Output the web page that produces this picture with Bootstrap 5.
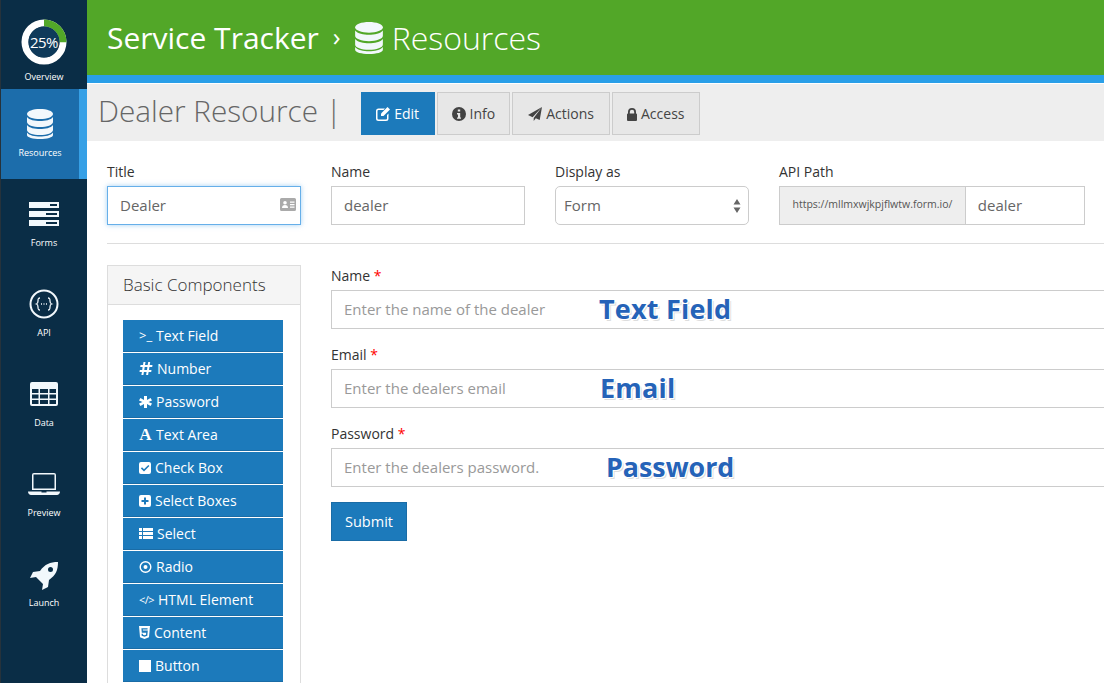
<!DOCTYPE html>
<html lang="en">
<head>
  <meta charset="UTF-8" />
  <meta name="viewport" content="width=device-width, initial-scale=1" />
  <title>Service Tracker - Resources</title>
  <link href="https://cdn.jsdelivr.net/npm/bootstrap@5.3.0/dist/css/bootstrap.min.css" rel="stylesheet" />
  <style>
    html, body { height: 100%; overflow: hidden; }
    body { font-family: "Open Sans", "Noto Sans", sans-serif; font-size: 14px; color: #333; }

    /* Sidebar */
    .side-rail { width: 87px; height: 683px; background: #0a2d46; border-left: 1px solid #26323b; flex-shrink: 0; }
    .side-item { height: 90px; padding-top: 19px; color: #fff; font-size: 9px; line-height: 12px; text-decoration: none; }
    .side-icon { height: 32px; margin-bottom: 7px; }
    .side-icon svg { display: block; fill: #f2f8fc; }
    .side-icon svg.api-glyph { fill: none; }
    .side-item.is-active { background: #1c6dab; border-right: 8px solid #36a0e6; }
    .side-first { height: 89px; }
    .donut-box { width: 46px; height: 46px; margin-bottom: 6px; }
    .donut-box svg { fill: none; }
    .donut-label { font-size: 15px; line-height: 1; letter-spacing: -.5px; }

    /* Header */
    .top-band { height: 83px; background: #52a728; border-bottom: 8px solid #2a9fe8; padding-left: 20px; color: #fff; font-size: 30px; }
    .top-band .crumb-sep { font-size: 26px; margin: 0 14px; position: relative; top: -1px; }
    .top-band .crumb-light { font-size: 32px; font-weight: 300; }
    .top-band svg { fill: #f2f8fc; margin-right: 9px; }

    /* Toolbar */
    .tool-band { height: 57px; margin-top: 1px; background: #eee; padding-left: 11px; padding-bottom: 6px; }
    .page-head { font-size: 29.700px; font-weight: 300; color: #666; margin: 3px 19px 0 0; line-height: 1; align-self: center; }
    .tool-btn { height: 43px; background: #e7e7e7; border: 1px solid #ccc; color: #444; font-size: 14px; padding: 0 14px; margin-right: 2px; }
    .tool-btn svg { fill: currentColor; margin-right: 4px; vertical-align: -2px; }
    .tool-btn.is-on { background: #1c7abb; border-color: #1c7abb; color: #fff; padding: 0 14.500px; }
    .tool-btn.is-wide { padding: 0 15px; }

    /* Settings row */
    .form-area { padding: 20px 0 0 20px; }
    .field-w { width: 194px; }
    .field-api { width: 306px; }
    .settings-row { gap: 30px; }
    .form-label { font-size: 14px; line-height: 21px; margin-bottom: 4px; color: #333; }
    .form-label .req { color: #f00; }
    .form-control, .form-select { height: 39px; border: 1px solid #ccc; border-radius: 0; font-size: 15px; color: #666; padding: 5px 12px 6px; }
    .form-control::placeholder { color: #999; font-size: 15px; }
    .title-input, .title-input:focus { border-color: #66afe9; box-shadow: 0 0 5px rgba(102,175,233,.6); }
    .form-select {
      border-radius: 5px;
      padding-left: 8px;
      background-size: 8px 16px;
      background-position: right 7px center;
      background-image: url("data:image/svg+xml,%3csvg xmlns='http://www.w3.org/2000/svg' viewBox='0 0 8 16'%3e%3cpath fill='%23666' d='M4 1l3.5 5.5h-7zM4 15l-3.5-5.5h7z'/%3e%3c/svg%3e");
    }
    .api-prefix { background: #eee; border: 1px solid #ccc; border-radius: 0; font-size: 10.500px; color: #555; padding: 0 12.500px 2px; }
    .id-icon { position: absolute; right: 5px; top: 12px; fill: #aaa; }
    .split-line { margin: 18px 0 21px; border: 0; border-top: 1px solid #ddd; opacity: 1; }

    /* Builder */
    .builder-row { gap: 30px; }
    .comp-panel { width: 194px; height: 440px; border: 1px solid #ddd; border-bottom: 0; flex-shrink: 0; }
    .comp-head { height: 39px; background: #f5f5f5; border-bottom: 1px solid #ddd; font-size: 17px; font-weight: 300; color: #333; padding-left: 15px; }
    .comp-list { padding: 15px; gap: 1px; }
    .comp-btn { width: 160px; height: 32px; background: #1c7abb; border: 0; border-bottom: 1px solid #1a6ca6; border-radius: 0; color: #fff; font-size: 14px; padding: 0 0 0 16px; gap: 4px; }
    .comp-btn svg { fill: #fff; flex-shrink: 0; }
    .comp-btn:hover { background: #1c7abb; color: #fff; }
    .comp-mark { width: 13px; line-height: 1; font-size: 13px; white-space: nowrap; }
    .comp-serif { width: 13px; font-family: "Liberation Serif", serif; font-weight: 700; font-size: 17px; line-height: 1; }
    .comp-code { width: 15px; font-size: 11px; line-height: 1; white-space: nowrap; letter-spacing: -.5px; }
    .comp-stop { width: 12px; height: 12px; background: #fff; }
    .form-pane { width: 800px; flex-shrink: 0; }
    .pane-group { margin-bottom: 15px; }
    .field-note { position: absolute; top: -1px; font-weight: 700; font-size: 27px; line-height: 39px; letter-spacing: .2px; color: #2563b8; text-shadow: -1px 0 #fff, 1px 0 #fff, 0 1px #fff, 1px 1px #fff, 0 -1px #fff, 2px 2px #ddd; pointer-events: none; }
    .note-text { left: 268px; }
    .note-email { left: 269px; }
    .note-pass { left: 275px; letter-spacing: 0; font-size: 26.800px; }
    .submit-btn { height: 39px; width: 76px; background: #1c7abb; border: 1px solid #1a6ca6; border-radius: 0; color: #fff; font-size: 14.500px; padding: 0; }
  </style>
</head>
<body>
  <!-- Icon sprites -->
  <svg width="0" height="0" class="position-absolute">
    <symbol id="i-db" viewBox="0 0 26 30">
      <path d="M13 0c7 0 13 2 13 5s-6 5-13 5S0 8 0 5s6-5 13-5z"/>
      <path d="M0 8c2 3 8 4 13 4s11-1 13-4v5c0 3-6 5-13 5S0 16 0 13z"/>
      <path d="M0 16c2 3 8 4 13 4s11-1 13-4v5c0 3-6 5-13 5S0 24 0 21z"/>
      <path d="M0 23.500c2 3 8 4 13 4s11-1 13-4V26c0 2.500-6 4-13 4S0 28.500 0 26z"/>
    </symbol>
    <symbol id="i-id" viewBox="0 0 16 13">
      <path fill-rule="evenodd" d="M1.500 0h13A1.500 1.500 0 0 1 16 1.500v10a1.500 1.500 0 0 1-1.500 1.500h-13A1.500 1.500 0 0 1 0 11.500v-10A1.500 1.500 0 0 1 1.500 0zM5 3a1.800 1.800 0 1 0 0 3.600A1.800 1.800 0 0 0 5 3zM2 10h6c0-2-1-3-3-3s-3 1-3 3zM10 3.500v1.300h4.500V3.500zM10 6v1.300h4.500V6zM10 8.500v1.300h4.500V8.500z"/>
    </symbol>
    <symbol id="i-edit" viewBox="0 0 14 14">
      <path d="M2.500 1.500H9L7.500 3h-5a1 1 0 0 0-1 1v7.500a1 1 0 0 0 1 1H10a1 1 0 0 0 1-1V8l1.500-1.500v5A2.500 2.500 0 0 1 10 14H2.500A2.500 2.500 0 0 1 0 11.500V4a2.500 2.500 0 0 1 2.500-2.500z"/>
      <path d="M11.500 0L14 2.500 7.500 9H5V6.500z"/>
    </symbol>
    <symbol id="i-info" viewBox="0 0 14 14">
      <path fill-rule="evenodd" d="M7 0a7 7 0 1 1 0 14A7 7 0 0 1 7 0zM5.800 2.500v2h2.400v-2zM5 6v1.400h1v3H5v1.300h4v-1.300H8.200V6z"/>
    </symbol>
    <symbol id="i-plane" viewBox="0 0 14 14">
      <path d="M14 0L11.700 13 7.800 11.300 5.700 14V11zM0 8.100L14 0 4.600 10.300z"/>
    </symbol>
    <symbol id="i-lock" viewBox="0 0 10 13">
      <path fill-rule="evenodd" d="M1 5.500V4a4 4 0 0 1 8 0v1.500a1 1 0 0 1 1 1V12a1 1 0 0 1-1 1H1a1 1 0 0 1-1-1V6.500a1 1 0 0 1 1-1zM2.800 5.500h4.400V4a2.200 2.200 0 0 0-4.400 0z"/>
    </symbol>
    <symbol id="i-forms" viewBox="0 0 30 24">
      <path fill-rule="evenodd" d="M0 0h30v6H0zM21 2v2h7V2zM0 9h30v6H0zM17 11v2h11v-2zM0 18h30v6H0zM17 20v2h11v-2z"/>
    </symbol>
    <symbol id="i-table" viewBox="0 0 28 24">
      <path fill-rule="evenodd" d="M2 0h24a2 2 0 0 1 2 2v20a2 2 0 0 1-2 2H2a2 2 0 0 1-2-2V2a2 2 0 0 1 2-2zM2 7v4h6.500V7zM10 7v4h8V7zM19.500 7v4H26V7zM2 12.500v4h6.500v-4zM10 12.500v4h8v-4zM19.500 12.500v4H26v-4zM2 18v4h6.500v-4zM10 18v4h8v-4zM19.500 18v4H26v-4z"/>
    </symbol>
    <symbol id="i-laptop" viewBox="0 0 32 22">
      <path fill-rule="evenodd" d="M6 0h20a2 2 0 0 1 2 2v15H4V2a2 2 0 0 1 2-2zM5.500 1.500v14h21v-14z"/>
      <path d="M0 18.500h13.500v1h5v-1H32c0 2-1.500 3.500-3 3.500H3c-1.500 0-3-1.500-3-3.500z"/>
    </symbol>
    <symbol id="i-rocket" viewBox="0 0 28 28">
      <path fill-rule="evenodd" d="M28 0c0 8-2 13-9 18l-1 7-6 3 1-6-7-7-6 1 3-6 7-1C15 2 20 0 28 0zM20.500 5a2.500 2.500 0 1 0 0 5 2.500 2.500 0 0 0 0-5z"/>
    </symbol>
    <symbol id="i-hash" viewBox="0 0 13 13">
      <path fill-rule="evenodd" d="M4 0h2L5.500 3h2.700L8.700 0h2l-.5 3H13l-.3 2H9.900l-.4 3H12l-.3 2H9.100l-.5 3h-2l.5-3H4.400l-.5 3h-2l.5-3H0l.3-2h2.400l.4-3H.7l.3-2h2.500zM5.200 5l-.4 3h2.700l.4-3z"/>
    </symbol>
    <symbol id="i-star" viewBox="0 0 12 12">
      <path d="M4.500 0h3v4.100L11.100 2l1.400 2.500L9 6l3.500 1.600-1.400 2.500-3.600-2.100V12h-3V8L.9 10.100-.5 7.600 3 6-.5 4.500.9 2l3.600 2.100z"/>
    </symbol>
    <symbol id="i-check" viewBox="0 0 12 12">
      <path fill-rule="evenodd" d="M2 0h8a2 2 0 0 1 2 2v8a2 2 0 0 1-2 2H2a2 2 0 0 1-2-2V2a2 2 0 0 1 2-2zM9.300 3L5 7.300 3 5.300 1.900 6.400 5 9.500l5.400-5.400z"/>
    </symbol>
    <symbol id="i-plus" viewBox="0 0 12 12">
      <path fill-rule="evenodd" d="M2 0h8a2 2 0 0 1 2 2v8a2 2 0 0 1-2 2H2a2 2 0 0 1-2-2V2a2 2 0 0 1 2-2zM5 2.500V5H2.500v2H5v2.500h2V7h2.500V5H7V2.500z"/>
    </symbol>
    <symbol id="i-list" viewBox="0 0 14 11">
      <path d="M0 0h3v3H0zM4 0h10v3H4zM0 4h3v3H0zM4 4h10v3H4zM0 8h3v3H0zM4 8h10v3H4z"/>
    </symbol>
    <symbol id="i-dot" viewBox="0 0 12 12">
      <path fill-rule="evenodd" d="M6 0a6 6 0 1 1 0 12A6 6 0 0 1 6 0zm0 1.400a4.600 4.600 0 1 0 0 9.200 4.600 4.600 0 0 0 0-9.200zM6 4a2 2 0 1 1 0 4 2 2 0 0 1 0-4z"/>
    </symbol>
    <symbol id="i-html5" viewBox="0 0 11 13">
      <path fill-rule="evenodd" d="M0 0h11l-1 11.300L5.500 13 1 11.300zM2.400 2.300l.4 4.500h4.400L7 8.700l-1.500.5L4 8.700l-.1-.9H2.500l.2 2 2.800.9 2.800-.9.5-5.400H3.900l-.1-.9h4.700l.1-1.200z"/>
    </symbol>
  </svg>

  <div class="d-flex">
    <!-- Left rail -->
    <nav class="side-rail d-flex flex-column">
      <a href="#" class="side-item side-first d-flex flex-column align-items-center">
        <div class="donut-box position-relative d-flex align-items-center justify-content-center">
          <svg class="position-absolute top-0 start-0" width="46" height="46" viewBox="0 0 46 46">
            <circle cx="23" cy="23" r="19" stroke="#fff" stroke-width="7"/>
            <circle cx="23" cy="23" r="19" stroke="#52a728" stroke-width="7" stroke-dasharray="29.85 119.4" transform="rotate(-90 23 23)"/>
            <circle cx="23" cy="23" r="15.500" fill="#0f3a5a"/>
          </svg>
          <span class="donut-label position-relative">25%</span>
        </div>
        Overview
      </a>
      <a href="#" class="side-item is-active d-flex flex-column align-items-center">
        <span class="side-icon d-flex align-items-center"><svg width="26" height="30"><use href="#i-db"/></svg></span>
        Resources
      </a>
      <a href="#" class="side-item d-flex flex-column align-items-center">
        <span class="side-icon d-flex align-items-center"><svg width="30" height="24"><use href="#i-forms"/></svg></span>
        Forms
      </a>
      <a href="#" class="side-item d-flex flex-column align-items-center">
        <span class="side-icon d-flex align-items-center">
          <svg class="api-glyph" width="30" height="30" viewBox="0 0 30 30">
            <circle cx="15" cy="15" r="13.500" stroke="#f2f8fc" stroke-width="2"/>
            <path d="M11 9c-2 0-2 1-2 3s0 2.500-1.500 3c1.500.5 1.500 1 1.500 3s0 3 2 3M19 9c2 0 2 1 2 3s0 2.500 1.500 3c-1.500.5-1.500 1-1.500 3s0 3-2 3" stroke="#f2f8fc" stroke-width="1.300"/>
            <path d="M12 15h1M14.500 15h1M17 15h1" stroke="#f2f8fc" stroke-width="1.500"/>
          </svg>
        </span>
        API
      </a>
      <a href="#" class="side-item d-flex flex-column align-items-center">
        <span class="side-icon d-flex align-items-center"><svg width="28" height="24"><use href="#i-table"/></svg></span>
        Data
      </a>
      <a href="#" class="side-item d-flex flex-column align-items-center">
        <span class="side-icon d-flex align-items-center"><svg width="32" height="22"><use href="#i-laptop"/></svg></span>
        Preview
      </a>
      <a href="#" class="side-item d-flex flex-column align-items-center">
        <span class="side-icon d-flex align-items-end"><svg width="28" height="28"><use href="#i-rocket"/></svg></span>
        Launch
      </a>
    </nav>

    <main class="flex-grow-1 overflow-hidden">
      <!-- Title band -->
      <header class="top-band d-flex align-items-center">
        <span>Service Tracker</span>
        <span class="crumb-sep">›</span>
        <svg width="28" height="32"><use href="#i-db"/></svg>
        <span class="crumb-light">Resources</span>
      </header>

      <!-- Tabs -->
      <div class="tool-band d-flex align-items-end">
        <h1 class="page-head">Dealer Resource |</h1>
        <button class="btn tool-btn rounded-0 is-on"><svg width="14" height="14"><use href="#i-edit"/></svg>Edit</button>
        <button class="btn tool-btn rounded-0"><svg width="14" height="14"><use href="#i-info"/></svg>Info</button>
        <button class="btn tool-btn rounded-0 is-wide"><svg width="14" height="14"><use href="#i-plane"/></svg>Actions</button>
        <button class="btn tool-btn rounded-0"><svg width="10" height="13"><use href="#i-lock"/></svg>Access</button>
      </div>

      <div class="form-area">
        <!-- Resource settings -->
        <div class="settings-row d-flex">
          <div class="field-w">
            <label class="form-label" for="f-title">Title</label>
            <div class="position-relative">
              <input id="f-title" class="form-control title-input" value="Dealer" />
              <svg class="id-icon" width="16" height="13"><use href="#i-id"/></svg>
            </div>
          </div>
          <div class="field-w">
            <label class="form-label" for="f-name">Name</label>
            <input id="f-name" class="form-control" value="dealer" />
          </div>
          <div class="field-w">
            <label class="form-label" for="f-display">Display as</label>
            <select id="f-display" class="form-select"><option>Form</option></select>
          </div>
          <div class="field-api">
            <label class="form-label" for="f-path">API Path</label>
            <div class="input-group flex-nowrap">
              <span class="input-group-text api-prefix">https://mllmxwjkpjflwtw.form.io/</span>
              <input id="f-path" class="form-control" value="dealer" />
            </div>
          </div>
        </div>

        <hr class="split-line" />

        <div class="builder-row d-flex">
          <!-- Component palette -->
          <aside class="comp-panel">
            <div class="comp-head d-flex align-items-center">Basic Components</div>
            <div class="comp-list d-flex flex-column">
              <button class="btn comp-btn d-flex align-items-center"><span class="comp-mark">&gt;_</span>Text Field</button>
              <button class="btn comp-btn d-flex align-items-center"><svg width="14" height="13"><use href="#i-hash"/></svg>Number</button>
              <button class="btn comp-btn d-flex align-items-center"><svg width="13" height="12"><use href="#i-star"/></svg>Password</button>
              <button class="btn comp-btn d-flex align-items-center"><span class="comp-serif">A</span>Text Area</button>
              <button class="btn comp-btn d-flex align-items-center"><svg width="12" height="12"><use href="#i-check"/></svg>Check Box</button>
              <button class="btn comp-btn d-flex align-items-center"><svg width="12" height="12"><use href="#i-plus"/></svg>Select Boxes</button>
              <button class="btn comp-btn d-flex align-items-center"><svg width="14" height="11"><use href="#i-list"/></svg>Select</button>
              <button class="btn comp-btn d-flex align-items-center"><svg width="13" height="12"><use href="#i-dot"/></svg>Radio</button>
              <button class="btn comp-btn d-flex align-items-center"><span class="comp-code">&lt;/&gt;</span>HTML Element</button>
              <button class="btn comp-btn d-flex align-items-center"><svg width="11" height="13"><use href="#i-html5"/></svg>Content</button>
              <button class="btn comp-btn d-flex align-items-center"><span class="comp-stop"></span>Button</button>
            </div>
          </aside>

          <!-- Form preview -->
          <section class="form-pane">
            <div class="pane-group">
              <label class="form-label" for="p-name">Name <span class="req">*</span></label>
              <div class="position-relative">
                <input id="p-name" class="form-control" placeholder="Enter the name of the dealer" />
                <span class="field-note note-text">Text Field</span>
              </div>
            </div>
            <div class="pane-group">
              <label class="form-label" for="p-email">Email <span class="req">*</span></label>
              <div class="position-relative">
                <input id="p-email" class="form-control" placeholder="Enter the dealers email" />
                <span class="field-note note-email">Email</span>
              </div>
            </div>
            <div class="pane-group">
              <label class="form-label" for="p-pass">Password <span class="req">*</span></label>
              <div class="position-relative">
                <input id="p-pass" class="form-control" placeholder="Enter the dealers password." />
                <span class="field-note note-pass">Password</span>
              </div>
            </div>
            <button class="btn submit-btn">Submit</button>
          </section>
        </div>
      </div>
    </main>
  </div>

  <script src="https://cdn.jsdelivr.net/npm/bootstrap@5.3.0/dist/js/bootstrap.bundle.min.js"></script>
</body>
</html>
